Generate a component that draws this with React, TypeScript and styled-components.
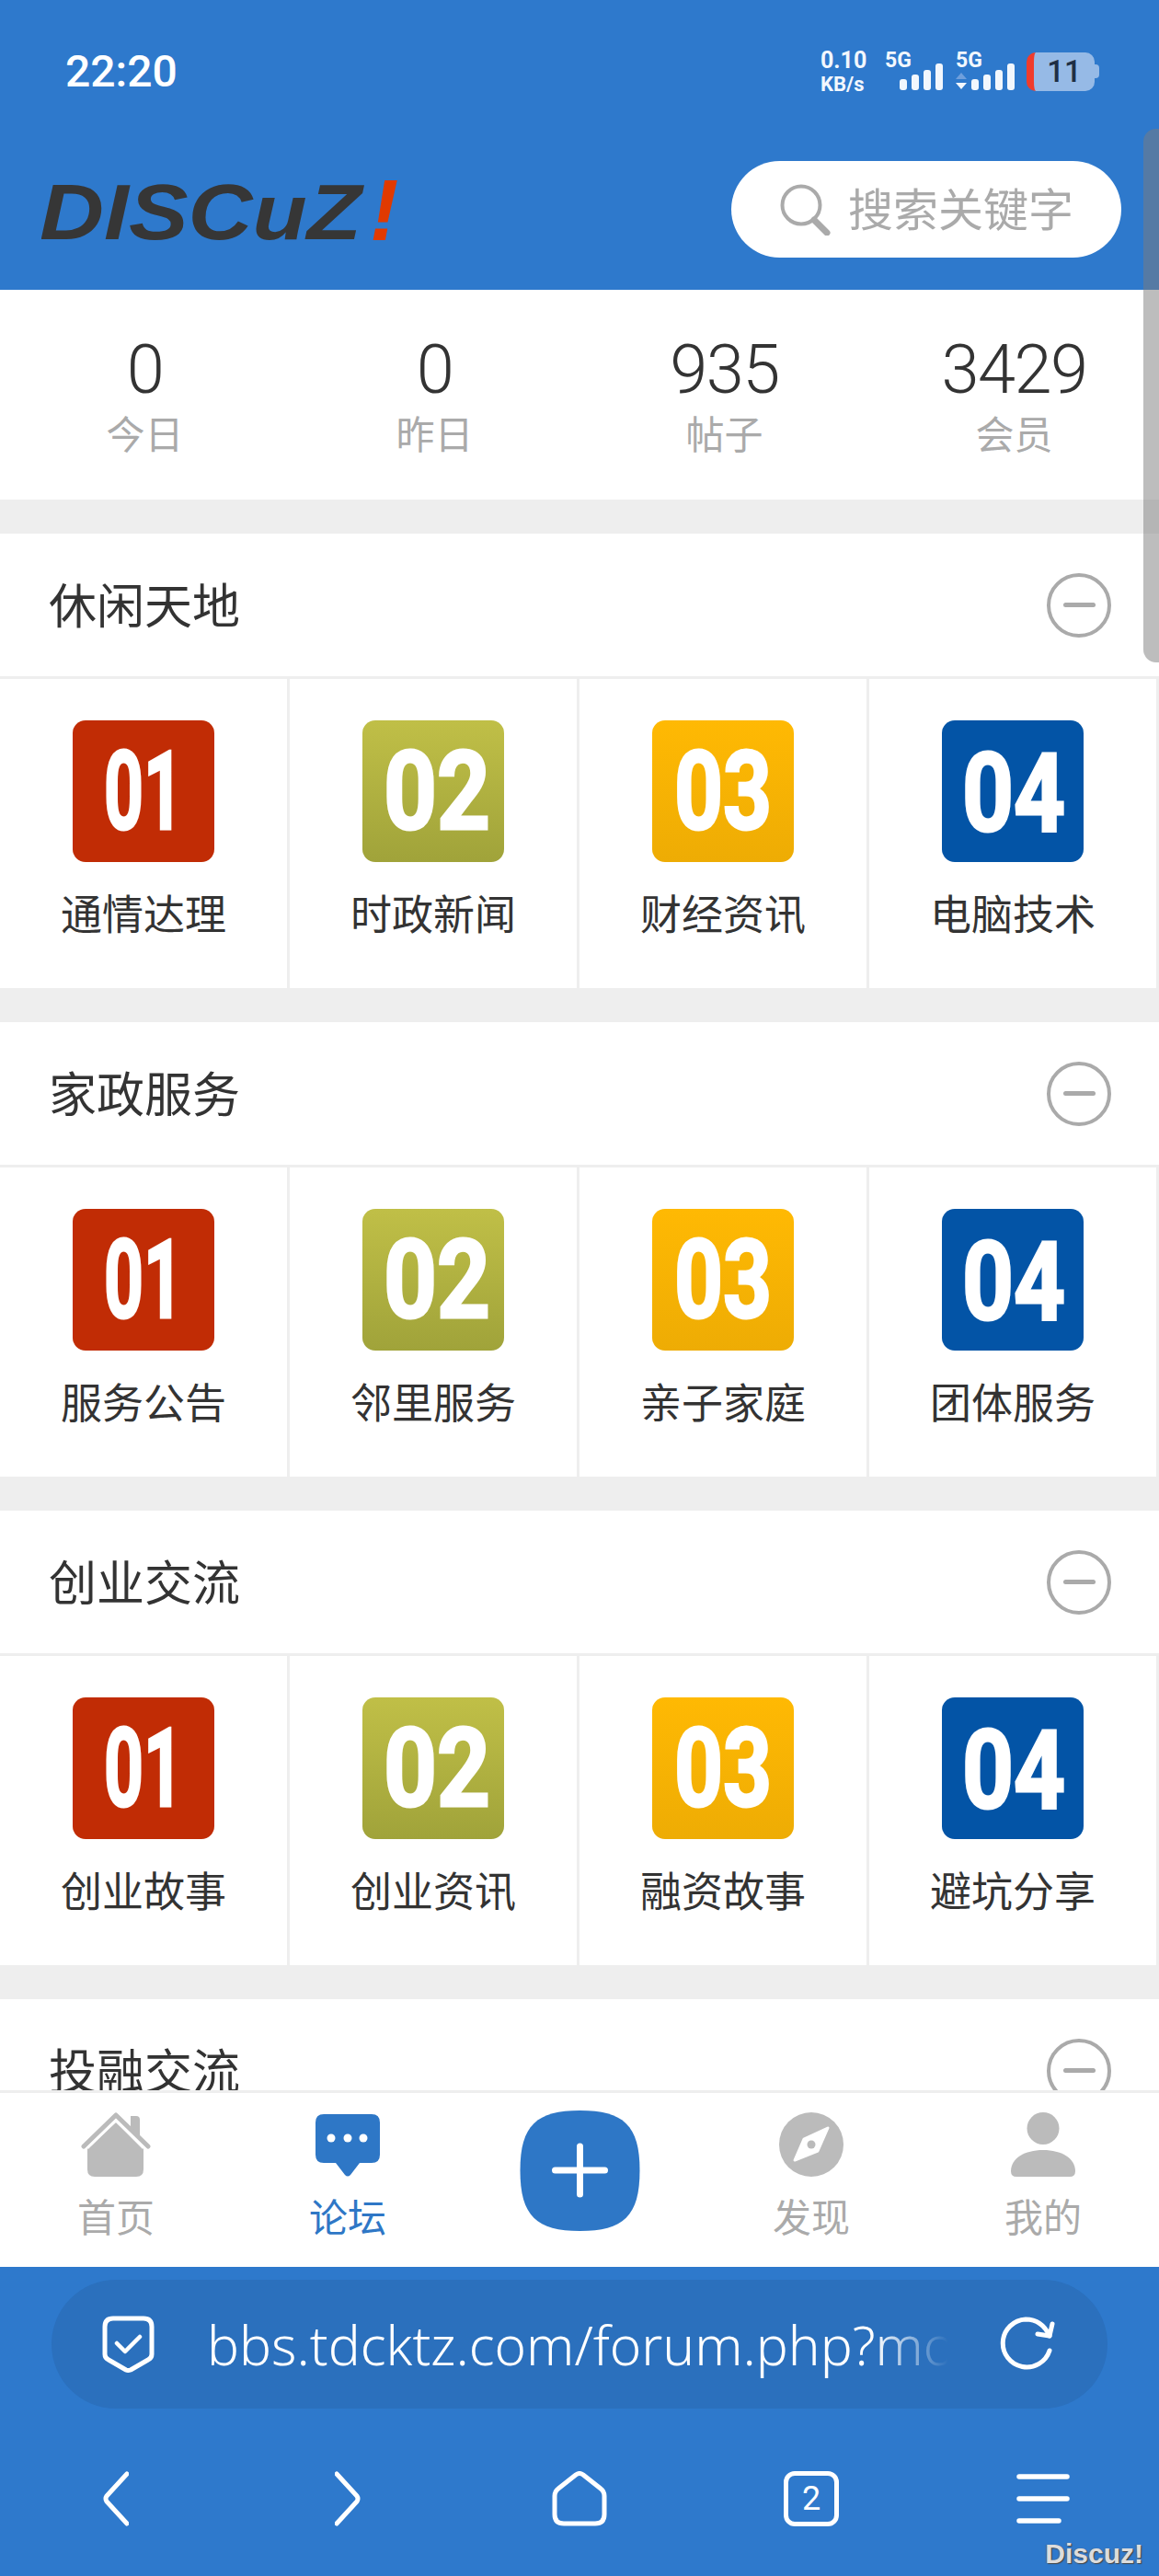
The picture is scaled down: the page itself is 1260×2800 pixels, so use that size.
import React from "react";
import styled, { createGlobalStyle } from "styled-components";

const CJK = `"Noto Sans CJK SC", "Noto Sans", sans-serif`;
const BLUE = "#2e79cc";
const LINE = "#eeeeee";

const Global = createGlobalStyle`
  html, body { margin: 0; padding: 0; background: ${LINE}; }
  * { box-sizing: border-box; }
`;

const Page = styled.div`
  position: relative;
  width: 1260px;
  height: 2800px;
  display: flex;
  flex-direction: column;
  overflow: hidden;
  font-family: ${CJK};
  background: ${LINE};
`;

const TopBar = styled.header`
  height: 315px;
  flex: none;
  background: ${BLUE};
  display: flex;
  flex-direction: column;
`;

const StatusBar = styled.div`
  height: 156px;
  display: flex;
  align-items: center;
  justify-content: space-between;
  padding: 0 70px 0 71px;
  color: #fff;
`;

const Clock = styled.span`
  font: 500 48px Roboto, sans-serif;
  line-height: 56px;
`;

const StatusIcons = styled.div`
  display: flex;
  align-items: center;
`;

const NetSpeed = styled.div`
  width: 50px;
  margin-right: 20px;
  display: flex;
  flex-direction: column;
  gap: 4px;
  font: 700 25px Roboto, sans-serif;
  line-height: 24px;
  color: #f2f7fd;
  white-space: nowrap;
`;

const NetUnit = styled.span`
  font-size: 22px;
  line-height: 20px;
`;

const SignalSvg = styled.svg`
  display: block;
  width: 64px;
  height: 56px;
  margin: -12px 13px 0 0;
`;

const Battery = styled.div`
  position: relative;
  width: 74px;
  height: 42px;
  border-radius: 10px;
  border-left: 8px solid #f03c2c;
  background: #96bae6;
  color: #1f2f45;
  font: 500 33px Roboto, sans-serif;
  line-height: 42px;
  text-align: center;
  &::after {
    content: "";
    position: absolute;
    right: -5px;
    top: 13px;
    width: 5px;
    height: 15px;
    border-radius: 0 4px 4px 0;
    background: #96bae6;
  }
`;

const HeaderRow = styled.div`
  height: 159px;
  display: flex;
  align-items: flex-start;
  justify-content: space-between;
  padding: 19px 41px 0 45px;
`;

const LogoSvg = styled.svg`
  display: block;
  width: 392px;
  height: 110px;
`;

const SearchPill = styled.div`
  width: 424px;
  height: 105px;
  border-radius: 53px;
  background: #fff;
  display: flex;
  align-items: center;
  padding-left: 53px;
  gap: 18px;
  color: #aaaaaa;
  font-size: 49px;
`;

const SearchText = styled.span`
  padding-bottom: 6px;
`;

const SearchIcon = styled.svg`
  display: block;
  width: 56px;
  height: 56px;
`;

const Content = styled.main`
  flex: 1;
  min-height: 0;
  overflow: hidden;
`;

const Stats = styled.section`
  height: 228px;
  background: #fff;
  display: grid;
  grid-template-columns: repeat(4, 1fr);
  padding-top: 47px;
`;

const Stat = styled.div`
  display: flex;
  flex-direction: column;
  align-items: center;
`;

const StatNumber = styled.span`
  font: 350 74px Roboto, sans-serif;
  letter-spacing: -1.5px;
  line-height: 80px;
  color: #333;
`;

const StatLabel = styled.span`
  margin-top: 3px;
  font-size: 42px;
  line-height: 50px;
  color: #aaaaaa;
`;

const Section = styled.section`
  margin-top: 37px;
  background: #fff;
`;

const SectionHead = styled.div`
  height: 155px;
  display: flex;
  align-items: center;
  justify-content: space-between;
  padding: 0 52px 0 53px;
`;

const SectionTitle = styled.h2`
  margin: 0 0 5px;
  font-size: 52px;
  font-weight: 400;
  color: #333;
`;

const Collapse = styled.span`
  width: 70px;
  height: 70px;
  border-radius: 50%;
  border: 4px solid #aaaaaa;
  display: flex;
  align-items: center;
  justify-content: center;
  &::before {
    content: "";
    width: 35px;
    height: 5px;
    border-radius: 3px;
    background: #aaaaaa;
  }
`;

const ForumGrid = styled.div`
  display: grid;
  grid-template-columns: repeat(4, 1fr);
  border-top: 3px solid ${LINE};
`;

const ForumCell = styled.a`
  height: 336px;
  padding-top: 45px;
  border-right: 3px solid ${LINE};
  display: flex;
  flex-direction: column;
  align-items: center;
`;

const ForumIcon = styled.span<{ $bg: string }>`
  width: 154px;
  height: 154px;
  border-radius: 14px;
  background: ${(p) => p.$bg};
`;

const ForumDigits = styled.svg`
  display: block;
  width: 154px;
  height: 154px;
  overflow: visible;
`;

const ForumLabel = styled.span`
  margin-top: 25px;
  font-size: 45px;
  line-height: 60px;
  color: #333;
`;

const BottomNav = styled.nav`
  flex: none;
  height: 192px;
  background: #fff;
  border-top: 3px solid ${LINE};
  display: grid;
  grid-template-columns: repeat(5, 1fr);
`;

const NavItem = styled.a<{ $active?: boolean }>`
  padding-top: 21px;
  display: flex;
  flex-direction: column;
  align-items: center;
  color: ${(p) => (p.$active ? "#2e77c6" : "#aaaaaa")};
`;

const NavIcon = styled.svg`
  display: block;
  height: 70px;
`;

const NavLabel = styled.span`
  margin-top: 18px;
  font-size: 42px;
  line-height: 48px;
`;

const PlusSlot = styled.div`
  padding-top: 19px;
  display: flex;
  justify-content: center;
`;

const PlusSvg = styled.svg`
  display: block;
  width: 131px;
  height: 131px;
`;

const BrowserBar = styled.footer`
  position: relative;
  flex: none;
  height: 336px;
  background: ${BLUE};
  padding-top: 14px;
`;

const UrlPill = styled.div`
  height: 140px;
  margin: 0 56px;
  border-radius: 70px;
  background: #2b70bd;
  display: flex;
  align-items: center;
  padding-left: 55px;
`;

const ShieldSvg = styled.svg`
  display: block;
  flex: none;
  width: 57px;
  height: 62px;
`;

const UrlText = styled.div`
  width: 814px;
  margin-left: 57px;
  overflow: hidden;
  white-space: nowrap;
  font: 350 58.5px "Noto Sans", sans-serif;
  line-height: 80px;
  color: #fff;
  -webkit-mask-image: linear-gradient(to right, #000 89%, transparent 99%);
  mask-image: linear-gradient(to right, #000 89%, transparent 99%);
`;

const RefreshSvg = styled.svg`
  display: block;
  flex: none;
  width: 60px;
  height: 60px;
  margin-left: 48px;
`;

const Toolbar = styled.div`
  margin-top: 68px;
  display: grid;
  grid-template-columns: repeat(5, 1fr);
  justify-items: center;
`;

const ToolSvg = styled.svg`
  display: block;
  height: 60px;
`;

const TabCount = styled.span`
  width: 60px;
  height: 60px;
  border: 5px solid #fff;
  border-radius: 12px;
  display: flex;
  align-items: center;
  justify-content: center;
  color: #fff;
  font: 400 36px Roboto, sans-serif;
`;

const Watermark = styled.span`
  position: absolute;
  right: 17px;
  bottom: 6px;
  font: 700 30px "Liberation Sans", sans-serif;
  line-height: 36px;
  color: #dcdcdc;
  text-shadow: 1px 1px 1px #444, -1px 0 1px #56657a;
`;

const Scrollbar = styled.div`
  position: absolute;
  top: 140px;
  right: 0;
  width: 17px;
  height: 580px;
  border-radius: 14px 0 0 14px;
  background: rgba(123, 123, 123, 0.5);
`;

type Digit = { text: string; x: number; len: number; y: number; bg: string };

const DIGITS: Digit[] = [
  { text: "01", x: 34, len: 86, y: 118, bg: "#c12c05" },
  { text: "02", x: 23, len: 116, y: 118, bg: "linear-gradient(#c0bf47, #a0a33a)" },
  { text: "03", x: 24, len: 106, y: 118, bg: "linear-gradient(#ffb903, #eeac04)" },
  { text: "04", x: 22, len: 112, y: 120, bg: "#0354a6" },
];

const SECTIONS = [
  { title: "休闲天地", items: ["通情达理", "时政新闻", "财经资讯", "电脑技术"] },
  { title: "家政服务", items: ["服务公告", "邻里服务", "亲子家庭", "团体服务"] },
  { title: "创业交流", items: ["创业故事", "创业资讯", "融资故事", "避坑分享"] },
];

const STATS = [
  ["0", "今日"],
  ["0", "昨日"],
  ["935", "帖子"],
  ["3429", "会员"],
];

function Signal({ arrows }: { arrows?: boolean }) {
  const xs = arrows ? [17, 30, 43, 56] : [16, 29, 42, 55];
  const tops = [30, 25, 20, 13];
  return (
    <SignalSvg viewBox="0 -12 64 56">
      <text x="0" y="17" fontFamily="Roboto" fontWeight="700" fontSize="23" fill="#f2f7fd">
        5G
      </text>
      {xs.map((x, i) => (
        <rect key={x} x={x} y={tops[i]} width="8" height={42 - tops[i]} rx="3" fill="#f2f7fd" />
      ))}
      {arrows && (
        <>
          <path d="M0 30 L6 23 L12 30 Z" fill="#6f9fdc" />
          <path d="M0 34 L12 34 L6 41 Z" fill="#f2f7fd" />
        </>
      )}
    </SignalSvg>
  );
}

export default function App() {
  return (
    <Page>
      <Global />
      <TopBar>
        <StatusBar>
          <Clock>22:20</Clock>
          <StatusIcons>
            <NetSpeed>
              <span>0.10</span>
              <NetUnit>KB/s</NetUnit>
            </NetSpeed>
            <Signal />
            <Signal arrows />
            <Battery>11</Battery>
          </StatusIcons>
        </StatusBar>
        <HeaderRow>
          <LogoSvg viewBox="0 0 392 110">
            <text
              x="-2"
              y="85"
              fontFamily="Liberation Sans"
              fontWeight="700"
              fontStyle="italic"
              fontSize="86"
              textLength="350"
              lengthAdjust="spacingAndGlyphs"
              fill="#363636"
            >
              DISCuZ
            </text>
            <text
              x="357"
              y="86"
              fontFamily="Liberation Sans"
              fontWeight="700"
              fontStyle="italic"
              fontSize="94"
              fill="#e03a00"
            >
              !
            </text>
          </LogoSvg>
          <SearchPill>
            <SearchIcon viewBox="0 0 56 56" fill="none" stroke="#aaaaaa">
              <circle cx="23" cy="23" r="20.5" strokeWidth="4" />
              <path d="M37 39 L51 53" strokeWidth="7" strokeLinecap="round" />
            </SearchIcon>
            <SearchText>搜索关键字</SearchText>
          </SearchPill>
        </HeaderRow>
      </TopBar>

      <Content>
        <Stats>
          {STATS.map(([n, l]) => (
            <Stat key={l}>
              <StatNumber>{n}</StatNumber>
              <StatLabel>{l}</StatLabel>
            </Stat>
          ))}
        </Stats>
        {SECTIONS.map((s) => (
          <Section key={s.title}>
            <SectionHead>
              <SectionTitle>{s.title}</SectionTitle>
              <Collapse />
            </SectionHead>
            <ForumGrid>
              {s.items.map((name, i) => (
                <ForumCell key={name}>
                  <ForumIcon $bg={DIGITS[i].bg}>
                    <ForumDigits viewBox="0 0 154 154">
                      <text
                        x={DIGITS[i].x}
                        y={DIGITS[i].y}
                        fontFamily="Roboto"
                        fontWeight="700"
                        fontSize="118"
                        textLength={DIGITS[i].len}
                        lengthAdjust="spacingAndGlyphs"
                        fill="#fff"
                        stroke="#fff"
                        strokeWidth="3"
                      >
                        {DIGITS[i].text}
                      </text>
                    </ForumDigits>
                  </ForumIcon>
                  <ForumLabel>{name}</ForumLabel>
                </ForumCell>
              ))}
            </ForumGrid>
          </Section>
        ))}
        <Section>
          <SectionHead>
            <SectionTitle>投融交流</SectionTitle>
            <Collapse />
          </SectionHead>
        </Section>
      </Content>

      <BottomNav>
        <NavItem>
          <NavIcon viewBox="0 0 76 70" width="76">
            <path d="M54 4 h6 q4 0 4 4 V26 L54 17 Z" fill="#bbbbbb" />
            <path d="M7 39 L38 11 L68 39 V62 Q68 70 60 70 H15 Q7 70 7 62 Z" fill="#bbbbbb" />
            <path d="M3 37 L38 3 L73 37" fill="none" stroke="#bbbbbb" strokeWidth="5" strokeLinecap="round" strokeLinejoin="round" />
            <path d="M7 39 L38 9 L68 39" fill="none" stroke="#fff" strokeWidth="2.5" />
          </NavIcon>
          <NavLabel>首页</NavLabel>
        </NavItem>
        <NavItem $active>
          <NavIcon viewBox="0 0 70 70" width="70">
            <path
              d="M9 2 H61 Q70 2 70 11 V46 Q70 55 61 55 H48 L38 68 Q35 71 32 68 L22 55 H9 Q0 55 0 46 V11 Q0 2 9 2 Z"
              fill="#2e77c6"
            />
            <circle cx="17" cy="28" r="4.5" fill="#fff" />
            <circle cx="35" cy="28" r="4.5" fill="#fff" />
            <circle cx="52" cy="28" r="4.5" fill="#fff" />
          </NavIcon>
          <NavLabel>论坛</NavLabel>
        </NavItem>
        <PlusSlot>
          <PlusSvg viewBox="0 0 130 131">
            <path
              d="M65 0 C112 0 130 16 130 65 C130 115 112 131 65 131 C18 131 0 115 0 65 C0 16 18 0 65 0 Z"
              fill="#2e77c6"
            />
            <path d="M65 39 V91 M38 65 H92" stroke="#fff" strokeWidth="7" strokeLinecap="round" />
          </PlusSvg>
        </PlusSlot>
        <NavItem>
          <NavIcon viewBox="0 0 70 70" width="70">
            <circle cx="35" cy="35" r="35" fill="#bbbbbb" />
            <path d="M53 17 L42 42 L17 52 L27 29 Z" fill="#fff" stroke="#fff" strokeWidth="3" strokeLinejoin="round" />
            <circle cx="35" cy="35" r="4.5" fill="#bbbbbb" />
          </NavIcon>
          <NavLabel>发现</NavLabel>
        </NavItem>
        <NavItem>
          <NavIcon viewBox="0 0 70 70" width="70">
            <ellipse cx="35" cy="17.5" rx="17.5" ry="17.5" fill="#bbbbbb" />
            <path d="M0 64 C0 50 15 41 35 41 C55 41 70 50 70 64 Q70 70 64 70 H6 Q0 70 0 64 Z" fill="#bbbbbb" />
          </NavIcon>
          <NavLabel>我的</NavLabel>
        </NavItem>
      </BottomNav>

      <BrowserBar>
        <UrlPill>
          <ShieldSvg viewBox="0 0 57 62" fill="none" stroke="#fff" strokeWidth="5" strokeLinecap="round" strokeLinejoin="round">
            <path d="M12 3 H45 Q54 3 54 12 V42 Q54 46 50 48 L31 59 Q28 60 26 59 L7 48 Q3 46 3 42 V12 Q3 3 12 3 Z" />
            <path d="M16 30 L25 39 L41 23" strokeWidth="4.5" />
          </ShieldSvg>
          <UrlText>bbs.tdcktz.com/forum.php?mod=forumdisplay</UrlText>
          <RefreshSvg viewBox="0 0 60 60" fill="none" stroke="#fff" strokeWidth="5" strokeLinecap="round" strokeLinejoin="round">
            <path d="M54 21 C48 8 38 3 28 3 A26 26 0 1 0 54 37" />
            <path d="M57 8 L54 21 L41 19" />
          </RefreshSvg>
        </UrlPill>
        <Toolbar>
          <ToolSvg viewBox="0 0 28 60" width="28" fill="none" stroke="#fff" strokeWidth="5" strokeLinecap="round" strokeLinejoin="round">
            <path d="M26 3 L4 27 Q2 30 4 33 L26 57" />
          </ToolSvg>
          <ToolSvg viewBox="0 0 28 60" width="28" fill="none" stroke="#fff" strokeWidth="5" strokeLinecap="round" strokeLinejoin="round">
            <path d="M2 3 L24 27 Q26 30 24 33 L2 57" />
          </ToolSvg>
          <ToolSvg viewBox="0 0 60 60" width="60" fill="none" stroke="#fff" strokeWidth="5" strokeLinecap="round" strokeLinejoin="round">
            <path d="M26 4 Q30 1 34 4 L53 19 Q57 22 57 27 V47 Q57 57 47 57 H13 Q3 57 3 47 V27 Q3 22 7 19 Z" />
          </ToolSvg>
          <TabCount>2</TabCount>
          <ToolSvg viewBox="0 0 58 60" width="58" fill="none" stroke="#fff" strokeWidth="5.5" strokeLinecap="round">
            <path d="M3 6 H55 M3 30 H55 M3 54 H46" />
          </ToolSvg>
        </Toolbar>
        <Watermark>Discuz!</Watermark>
      </BrowserBar>
      <Scrollbar />
    </Page>
  );
}
